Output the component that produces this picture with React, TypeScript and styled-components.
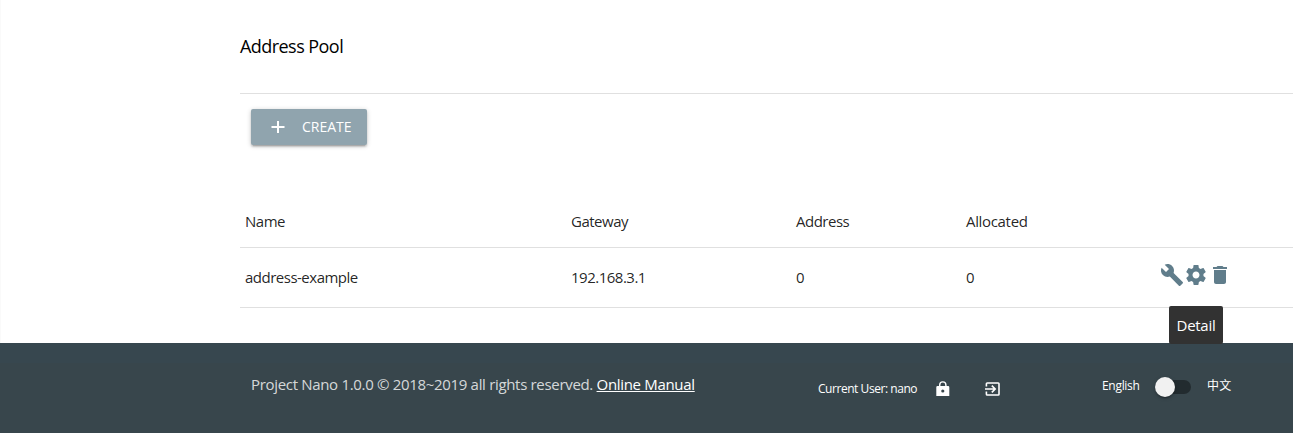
import React from "react";
import styled, { createGlobalStyle } from "styled-components";
import { MdBuild, MdDelete } from "react-icons/md";

const GlobalStyle = createGlobalStyle`
  *, *::before, *::after { box-sizing: border-box; }
  body {
    margin: 0;
    background: #fff;
    color: rgba(0, 0, 0, 0.87);
    font-family: "Open Sans", "Noto Sans", "Noto Sans CJK SC", sans-serif;
    font-size: 15px;
    line-height: 22px;
    overflow: hidden;
  }
  svg { flex: none; }
`;

const Page = styled.div`
  display: flex;
  flex-direction: column;
  height: 433px;
  border-left: 1px solid #fafafa;
`;

const Main = styled.main`
  flex: 0 0 343px;
  padding-left: 239px;
`;

const Heading = styled.header`
  height: 94px;
  padding-top: 33px;
  border-bottom: 1px solid #e0e0e0;
  color: #000;
  font-size: 18px;
  line-height: 27px;
  letter-spacing: -0.55px;
`;

const Toolbar = styled.div`
  height: 102px;
  padding: 15px 11px 0;
`;

const CreateButton = styled.button`
  display: flex;
  align-items: center;
  width: 116px;
  height: 36px;
  padding: 0 0 0 20px;
  border: 0;
  border-radius: 2px;
  background: #90a4ae;
  color: #fff;
  font: inherit;
  font-size: 14px;
  box-shadow: 0 2px 2px 0 rgba(0, 0, 0, 0.14), 0 3px 1px -2px rgba(0, 0, 0, 0.12),
    0 1px 5px 0 rgba(0, 0, 0, 0.2);
`;

const CreateLabel = styled.span`
  margin-left: 17px;
`;

const Row = styled.div<{ $height: number }>`
  display: grid;
  grid-template-columns: 326px 225px 170px 194px 1fr;
  align-items: center;
  height: ${(p) => p.$height}px;
  padding-left: 5px;
  border-bottom: 1px solid #e0e0e0;
`;

const Cell = styled.span<{ $spacing?: number }>`
  padding-bottom: 2px;
  letter-spacing: ${(p) => p.$spacing ?? -0.5}px;
  white-space: nowrap;
`;

const Actions = styled.div`
  position: relative;
  display: flex;
  color: #607d8b;
  font-size: 24px;
  padding-bottom: 5px;
`;

const Tooltip = styled.div`
  position: absolute;
  top: 43px;
  left: 9px;
  width: 54px;
  height: 38px;
  border-radius: 2px;
  background: #323232;
  color: #fff;
  font-size: 15px;
  letter-spacing: -0.3px;
  line-height: 39px;
  text-align: center;
`;

const Footer = styled.footer`
  display: flex;
  flex: 1;
  margin-left: -1px;
  padding-left: 251px;
  background: linear-gradient(#37474f 0 20px, #38464c 20px);
  color: #fff;
`;

const Copyright = styled.p`
  width: 567px;
  margin: 0;
  padding-top: 30px;
  color: rgba(255, 255, 255, 0.8);
  letter-spacing: -0.32px;
  white-space: nowrap;
`;

const ManualLink = styled.a`
  color: #fff;
  text-decoration: underline;
`;

const UserArea = styled.div`
  display: flex;
  align-items: center;
  width: 284px;
  height: 91px;
  font-size: 12px;
`;

const UserName = styled.span`
  width: 118px;
  letter-spacing: -0.45px;
  white-space: nowrap;
`;

const FooterIcon = styled.span`
  display: flex;
  width: 49px;
`;

const Language = styled.label`
  display: flex;
  align-items: center;
  height: 86px;
  font-size: 12px;
`;

const LanguageName = styled.span<{ $width?: number }>`
  width: ${(p) => (p.$width ? `${p.$width}px` : "auto")};
  letter-spacing: ${(p) => (p.$width ? "-0.3px" : "0.3px")};
  white-space: nowrap;
`;

const Lever = styled.span`
  display: flex;
  align-items: center;
  width: 36px;
  height: 14px;
  margin: 2px 16px 0 0;
  border-radius: 15px;
  background: rgba(0, 0, 0, 0.38);
`;

const Thumb = styled.span`
  flex: 0 0 20px;
  height: 20px;
  border-radius: 50%;
  background: #f1f1f1;
  box-shadow: 0 3px 1px -2px rgba(0, 0, 0, 0.2), 0 2px 2px 0 rgba(0, 0, 0, 0.14),
    0 1px 5px 0 rgba(0, 0, 0, 0.12);
`;

const PlusIcon = () => (
  <svg width="14" height="12" viewBox="0 0 14 12" fill="currentColor">
    <path d="M6 0h2v5h5.5v2H8v5H6V7H.5V5H6z" />
  </svg>
);

const GearIcon = () => (
  <svg width="24" height="24" viewBox="0 0 24 24" fill="currentColor">
    <path d="M19.43 12.98c.04-.32.07-.64.07-.98s-.03-.66-.07-.98l2.11-1.65c.19-.15.24-.42.12-.64l-2-3.46c-.12-.22-.39-.3-.61-.22l-2.49 1c-.52-.4-1.08-.73-1.69-.98l-.38-2.65C14.46 2.18 14.25 2 14 2h-4c-.25 0-.46.18-.49.42l-.38 2.65c-.61.25-1.17.59-1.69.98l-2.49-1c-.23-.09-.49 0-.61.22l-2 3.46c-.13.22-.07.49.12.64l2.11 1.65c-.04.32-.07.65-.07.98s.03.66.07.98l-2.11 1.65c-.19.15-.24.42-.12.64l2 3.46c.12.22.39.3.61.22l2.49-1c.52.4 1.08.73 1.69.98l.38 2.65c.03.24.24.42.49.42h4c.25 0 .46-.18.49-.42l.38-2.65c.61-.25 1.17-.59 1.69-.98l2.49 1c.23.09.49 0 .61-.22l2-3.46c.12-.22.07-.49-.12-.64l-2.11-1.65zM12 15.5c-1.93 0-3.5-1.57-3.5-3.5s1.57-3.5 3.5-3.5 3.5 1.57 3.5 3.5-1.57 3.5-3.5 3.5z" />
  </svg>
);

const LockIcon = () => (
  <svg width="14" height="15" viewBox="0 0 14 15" fill="none">
    <path d="M3.7 6V4a3.1 3.1 0 0 1 6.2 0v2" stroke="currentColor" strokeWidth="1.4" />
    <path
      d="M1.5 5h10.6q1.2 0 1.2 1.2V15H.3V6.2Q.3 5 1.5 5zm5.3 3.4a1.6 1.6 0 1 0 0 3.2 1.6 1.6 0 0 0 0-3.2z"
      fill="currentColor"
      fillRule="evenodd"
    />
  </svg>
);

const ExitIcon = () => (
  <svg width="15" height="14" viewBox="0 0 15 14" fill="none" stroke="currentColor">
    <path d="M1.4 4.5V1.8q0-.8.8-.8h11q.8 0 .8.8v10.4q0 .8-.8.8h-11q-.8 0-.8-.8V9.5" strokeWidth="1.6" />
    <path d="M0 7h10M6.8 3.6 10.2 7l-3.4 3.4" strokeWidth="1.6" />
  </svg>
);

export default function App() {
  return (
    <Page>
      <GlobalStyle />
      <Main>
        <Heading>Address Pool</Heading>
        <Toolbar>
          <CreateButton>
            <PlusIcon />
            <CreateLabel>CREATE</CreateLabel>
          </CreateButton>
        </Toolbar>
        <Row $height={52}>
          <Cell>Name</Cell>
          <Cell>Gateway</Cell>
          <Cell>Address</Cell>
          <Cell $spacing={-0.33}>Allocated</Cell>
        </Row>
        <Row $height={60}>
          <Cell>address-example</Cell>
          <Cell>192.168.3.1</Cell>
          <Cell>0</Cell>
          <Cell>0</Cell>
          <Actions>
            <MdBuild />
            <GearIcon />
            <MdDelete />
            <Tooltip>Detail</Tooltip>
          </Actions>
        </Row>
      </Main>
      <Footer>
        <Copyright>
          Project Nano 1.0.0 © 2018~2019 all rights reserved. <ManualLink>Online Manual</ManualLink>
        </Copyright>
        <UserArea>
          <UserName>Current User: nano</UserName>
          <FooterIcon><LockIcon /></FooterIcon>
          <FooterIcon><ExitIcon /></FooterIcon>
        </UserArea>
        <Language>
          <LanguageName $width={53}>English</LanguageName>
          <Lever><Thumb /></Lever>
          <LanguageName>中文</LanguageName>
        </Language>
      </Footer>
    </Page>
  );
}
